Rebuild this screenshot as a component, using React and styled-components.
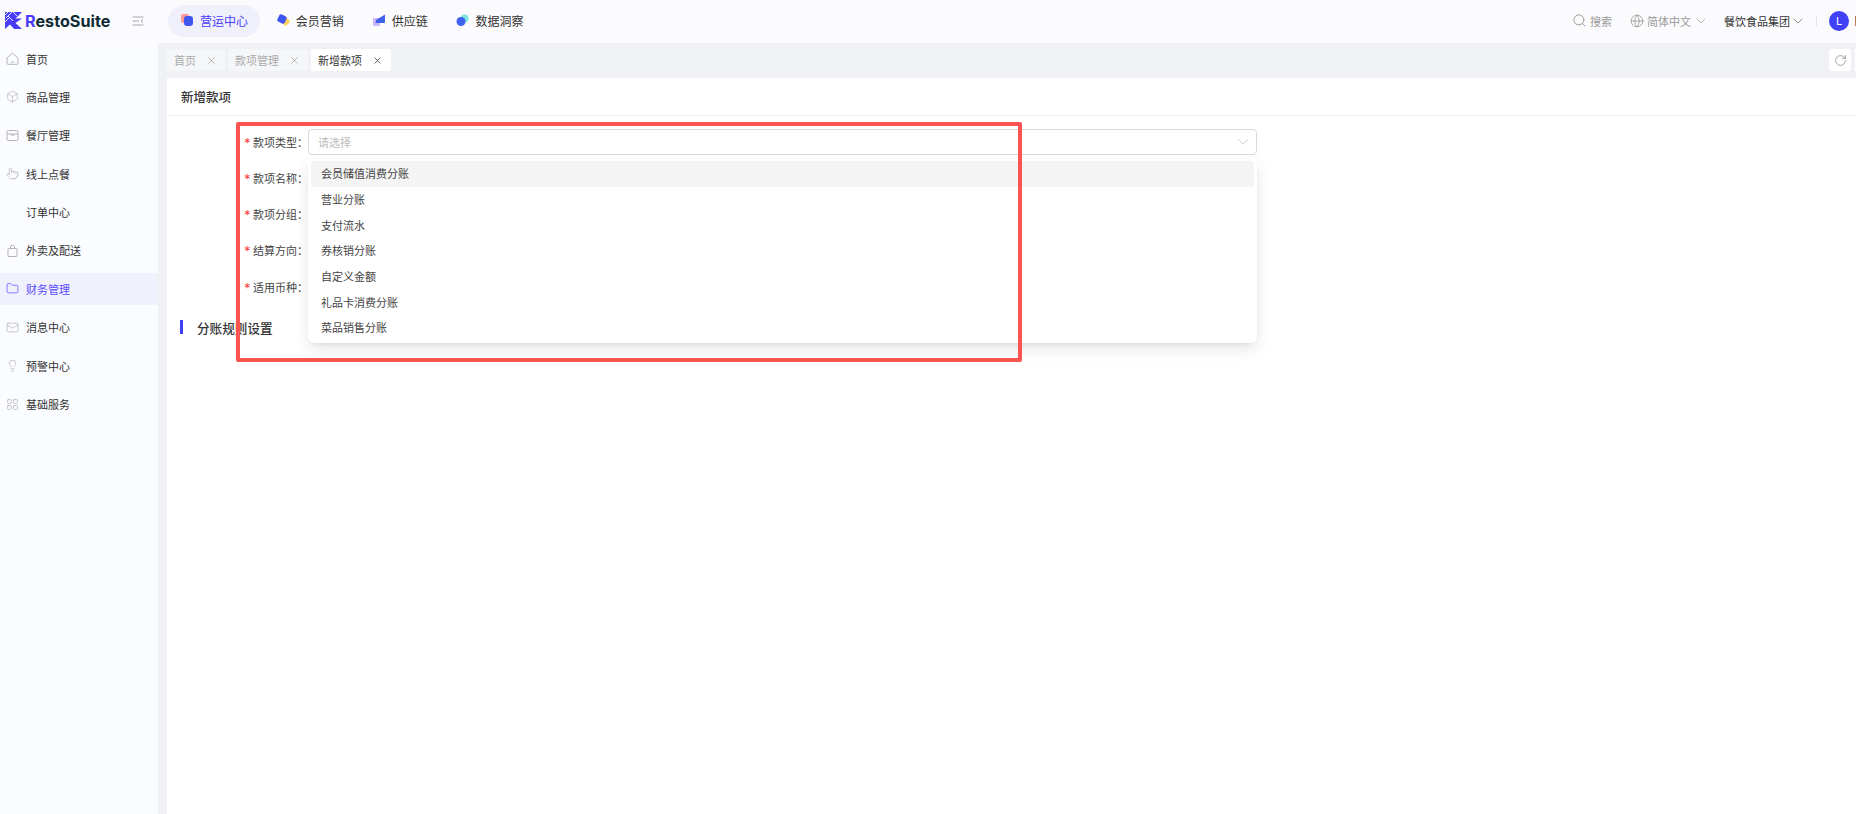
import React from "react";
import styled, { createGlobalStyle } from "styled-components";
import {
  Box,
  ChevronDown,
  Folder,
  Globe,
  LayoutGrid,
  Lightbulb,
  Mail,
  Pointer,
  RotateCw,
  Search,
  X,
} from "lucide-react";

const GlobalStyle = createGlobalStyle`
  html, body {
    margin: 0;
    height: 100%;
    overflow: hidden;
    background: #fff;
    font-family: Inter, "Noto Sans CJK SC", "Noto Sans", sans-serif;
    color: #333;
  }
  * { box-sizing: border-box; }
`;

const Page = styled.div`
  position: relative;
  width: 1856px;
  height: 814px;
  overflow: hidden;
  display: flex;
  flex-direction: column;
`;

const TopBar = styled.header`
  height: 43px;
  flex-shrink: 0;
  display: flex;
  align-items: center;
  padding-left: 5px;
  padding-bottom: 5px;
  padding-top: 3px;
  background: #fbfbfd;
  overflow: hidden;
`;

const Brand = styled.div`
  display: flex;
  align-items: center;
  gap: 3px;
  width: 127px;
`;

const BrandName = styled.span`
  font-size: 16.2px;
  font-weight: 700;
  color: #0f2a33;
  & b {
    color: #4a3dfa;
    font-weight: 700;
  }
`;

const CollapseIcon = styled.svg`
  width: 12px;
  height: 12px;
  margin-right: 24px;
  flex-shrink: 0;
`;

const NavList = styled.nav`
  display: flex;
  align-items: center;
  gap: 3.8px;
`;

const NavPill = styled.div`
  height: 32px;
  display: flex;
  align-items: center;
  gap: 6px;
  padding: 0 12px 0 13px;
  border-radius: 16px;
  font-size: 12px;
  background: ${(p) => (p.$active ? "#f0f0fb" : "transparent")};
  color: ${(p) => (p.$active ? "#4a3dfa" : "#333")};
`;

const NavIcon = styled.svg`
  width: 13px;
  height: 13px;
  flex-shrink: 0;
`;

const TopRight = styled.div`
  margin-left: auto;
  display: flex;
  align-items: center;
  font-size: 11px;
`;

const TopLink = styled.div`
  display: flex;
  align-items: center;
  gap: 3px;
  margin-right: ${(p) => p.$gap}px;
  color: ${(p) => (p.$dark ? "#333" : "#999")};
  & svg {
    flex-shrink: 0;
  }
`;

const Caret = styled(ChevronDown)`
  margin-left: ${(p) => p.$shift}px;
`;

const Divider = styled.span`
  width: 1px;
  height: 10px;
  background: #e4e4e8;
  margin-right: 12px;
`;

const Avatar = styled.span`
  width: 20px;
  height: 20px;
  border-radius: 50%;
  background: #4040f5;
  color: #fff;
  font-size: 11px;
  display: flex;
  align-items: center;
  justify-content: center;
  margin-right: 6px;
`;

const UserSliver = styled.span`
  width: 1px;
  height: 10px;
  background: #b87a50;
`;

const Body = styled.div`
  flex: 1;
  display: flex;
  min-height: 0;
`;

const Sidebar = styled.aside`
  width: 158px;
  flex-shrink: 0;
  background: #fbfcff;
  display: flex;
  flex-direction: column;
  gap: 6.4px;
`;

const MenuItem = styled.div`
  height: 32px;
  display: flex;
  align-items: center;
  gap: 7px;
  padding: 0 0 1px 6px;
  font-size: 11px;
  background: ${(p) => (p.$active ? "#f0f1fc" : "transparent")};
  color: ${(p) => (p.$active ? "#5b4dff" : "#333")};
  & svg {
    flex-shrink: 0;
    color: ${(p) => (p.$active ? "#7f75ff" : "#b4b4b8")};
  }
`;

const IconSlot = styled.span`
  width: 13px;
  height: 13px;
  flex-shrink: 0;
`;

const Main = styled.main`
  flex: 1;
  min-width: 0;
  background: #f0f1f5;
  padding-left: 9px;
  display: flex;
  flex-direction: column;
`;

const TabBar = styled.div`
  height: 35px;
  flex-shrink: 0;
  padding-top: 6px;
  display: flex;
  align-items: flex-start;
  gap: 3px;
`;

const Tab = styled.div`
  height: 22px;
  display: flex;
  align-items: center;
  justify-content: space-between;
  width: ${(p) => p.$width}px;
  padding: 0 8px 0 7px;
  border-radius: 3px;
  font-size: 11px;
  background: ${(p) => (p.$active ? "#fff" : "#f5f6f8")};
  color: ${(p) => (p.$active ? "#333" : "#aaa")};
  & svg {
    color: ${(p) => (p.$active ? "#333" : "#999")};
  }
`;

const RefreshButton = styled.div`
  margin-left: auto;
  margin-right: 4px;
  width: 22px;
  height: 22px;
  border-radius: 3px;
  background: #fff;
  color: #888;
  display: flex;
  align-items: center;
  justify-content: center;
`;

const NextSliver = styled.span`
  width: 1px;
  height: 22px;
  margin-left: -3px;
  background: #fff;
`;

const Card = styled.section`
  flex: 1;
  background: #fff;
`;

const CardTitle = styled.h1`
  margin: 0;
  height: 38px;
  padding-left: 14px;
  display: flex;
  align-items: center;
  font-size: 12.5px;
  font-weight: 500;
  color: #333;
  border-bottom: 1px solid #f0f0f0;
`;

const Form = styled.div`
  padding: 13px 0 0 77px;
  display: flex;
  flex-direction: column;
  gap: 10.3px;
  width: 1090px;
`;

const FormRow = styled.div`
  display: flex;
  align-items: center;
  height: 26px;
`;

const Label = styled.label`
  width: 64px;
  flex-shrink: 0;
  display: flex;
  align-items: center;
  padding-bottom: 1px;
  font-size: 11px;
  white-space: nowrap;
  color: #444;
  & i {
    width: 9px;
    padding-top: 3px;
    color: #f5443c;
    font-style: normal;
    font-size: 13px;
    line-height: 13px;
  }
`;

const Field = styled.div`
  position: relative;
  flex: 1;
  height: 26px;
  padding: 0 4px 0 9px;
  display: flex;
  align-items: center;
  justify-content: space-between;
  border: 1px solid #d9d9d9;
  border-radius: 4px;
  background: #fff;
`;

const Placeholder = styled.span`
  font-size: 11px;
  color: #bbb;
`;

const Dropdown = styled.ul`
  position: absolute;
  z-index: 2;
  top: 29px;
  left: -1px;
  right: -1px;
  height: 184px;
  margin: 0;
  padding: 2px 3px;
  list-style: none;
  background: #fff;
  border-radius: 6px;
  box-shadow: 0 6px 16px rgba(0, 0, 0, 0.1), 0 3px 6px -4px rgba(0, 0, 0, 0.12);
`;

const Option = styled.li`
  height: 25.7px;
  padding: 0 0 1px 10px;
  display: flex;
  align-items: center;
  font-size: 11px;
  color: #444;
  border-radius: 3px;
  background: ${(p) => (p.$active ? "#f4f4f4" : "transparent")};
`;

const Section = styled.h2`
  margin: 20px 0 0 13px;
  height: 14px;
  padding-left: 14px;
  display: flex;
  align-items: center;
  font-size: 12.6px;
  font-weight: 500;
  color: #333;
  border-left: 3px solid #4040f5;
`;

const Annotation = styled.div`
  position: absolute;
  z-index: 3;
  left: 236px;
  top: 122px;
  width: 786px;
  height: 240px;
  border: 4px solid #fb5252;
  border-radius: 2px;
  pointer-events: none;
`;

const MenuSvg = ({ children }) => (
  <svg width="13" height="13" viewBox="0 0 13 13" fill="none" stroke="currentColor" strokeWidth="1">
    {children}
  </svg>
);

const HouseIcon = () => (
  <MenuSvg>
    <path d="M1 6L6.5 1L12 6V11.5C12 12 11.7 12.3 11.2 12.3H1.8C1.3 12.3 1 12 1 11.5Z" />
    <path d="M5 10H8" />
  </MenuSvg>
);

const ShopIcon = () => (
  <MenuSvg>
    <rect x="1" y="1.5" width="11" height="10" rx="1.2" />
    <path d="M1 5H12M4.5 5C4.5 7 8.5 7 8.5 5" />
  </MenuSvg>
);

const BagIcon = () => (
  <MenuSvg>
    <rect x="2" y="4.5" width="9" height="8" rx="0.8" />
    <path d="M4.5 4.5V2.5C4.5 0.8 8.5 0.8 8.5 2.5V4.5" />
  </MenuSvg>
);

const sized = (Icon, stroke) => () => <Icon size={13} strokeWidth={stroke} />;

const menu = [
  ["首页", HouseIcon],
  ["商品管理", sized(Box, 1.3)],
  ["餐厅管理", ShopIcon],
  ["线上点餐", sized(Pointer, 1.3)],
  ["订单中心", null],
  ["外卖及配送", BagIcon],
  ["财务管理", sized(Folder, 1.8)],
  ["消息中心", sized(Mail, 1.3)],
  ["预警中心", sized(Lightbulb, 1.3)],
  ["基础服务", sized(LayoutGrid, 1.3)],
];

const options = [
  "会员储值消费分账",
  "营业分账",
  "支付流水",
  "券核销分账",
  "自定义金额",
  "礼品卡消费分账",
  "菜品销售分账",
];

const labels = ["款项名称", "款项分组", "结算方向", "适用币种"];

function Logo() {
  return (
    <svg width="17" height="17" viewBox="0 0 17 17">
      <path d="M0 0H17L10.5 6.5L17 6.5L10.5 11L17 17H9L5 12.5L0 17Z" fill="#4a3dfa" />
      <path d="M3 0L0 3M7 0L1 6M3 4L8 9M8 0L12 4M0 10L5 5" stroke="#fbfbfd" strokeWidth="0.9" />
    </svg>
  );
}

function NavGlyph({ kind }) {
  if (kind === "ops") {
    return (
      <NavIcon viewBox="0 0 13 13">
        <rect x="0" y="0" width="8" height="9" rx="2" fill="#ff9a9a" />
        <rect x="3" y="2" width="9" height="10" rx="3" fill="#3f55f0" />
      </NavIcon>
    );
  }
  if (kind === "member") {
    return (
      <NavIcon viewBox="0 0 13 13">
        <rect x="5" y="4" width="7" height="7" rx="2" transform="rotate(45 8.5 7.5)" fill="#ffd35c" />
        <rect x="1" y="1" width="8" height="8" rx="2" transform="rotate(25 5 5)" fill="#3f55f0" />
      </NavIcon>
    );
  }
  if (kind === "chain") {
    return (
      <NavIcon viewBox="0 0 13 13">
        <rect x="0" y="4" width="7" height="8" rx="1" fill="#cdb5f7" />
        <path d="M3 6L12 0.5V7.5C12 8.5 11.5 9 10.5 9H2.5Z" fill="#3f62e8" />
      </NavIcon>
    );
  }
  return (
    <NavIcon viewBox="0 0 13 13">
      <circle cx="8.5" cy="4.5" r="4" fill="#7de6e0" />
      <circle cx="5" cy="7.5" r="4.5" fill="#3f62f0" />
    </NavIcon>
  );
}

export default function App() {
  return (
    <Page>
      <GlobalStyle />
      <TopBar>
        <Brand>
          <Logo />
          <BrandName>
            <b>R</b>estoSuite
          </BrandName>
        </Brand>
        <CollapseIcon viewBox="0 0 12 12" fill="none" stroke="#a8a8ac" strokeWidth="1">
          <path d="M0.5 2H11.5M0.5 6H7M0.5 10H11.5" />
          <path d="M11 4.2L9 6L11 7.8" />
        </CollapseIcon>
        <NavList>
          <NavPill $active>
            <NavGlyph kind="ops" />
            营运中心
          </NavPill>
          <NavPill>
            <NavGlyph kind="member" />
            会员营销
          </NavPill>
          <NavPill>
            <NavGlyph kind="chain" />
            供应链
          </NavPill>
          <NavPill>
            <NavGlyph kind="data" />
            数据洞察
          </NavPill>
        </NavList>
        <TopRight>
          <TopLink $gap={18}>
            <Search size={15} color="#999" strokeWidth={1.5} />
            搜索
          </TopLink>
          <TopLink $gap={15}>
            <Globe size={14} color="#999" strokeWidth={1.4} />
            简体中文
            <Caret size={16} color="#aaa" strokeWidth={1.2} $shift={-1} />
          </TopLink>
          <TopLink $gap={10} $dark>
            餐饮食品集团
            <Caret size={16} color="#777" strokeWidth={1.2} $shift={-3} />
          </TopLink>
          <Divider />
          <Avatar>L</Avatar>
          <UserSliver />
        </TopRight>
      </TopBar>
      <Body>
        <Sidebar>
          {menu.map(([name, Icon]) => (
            <MenuItem key={name} $active={name === "财务管理"}>
              {Icon ? <Icon /> : <IconSlot />}
              {name}
            </MenuItem>
          ))}
        </Sidebar>
        <Main>
          <TabBar>
            <Tab $width={58}>
              首页
              <X size={11} strokeWidth={1.5} />
            </Tab>
            <Tab $width={80}>
              款项管理
              <X size={11} strokeWidth={1.5} />
            </Tab>
            <Tab $width={80} $active>
              新增款项
              <X size={11} strokeWidth={1.5} />
            </Tab>
            <RefreshButton>
              <RotateCw size={13} strokeWidth={1.4} />
            </RefreshButton>
            <NextSliver />
          </TabBar>
          <Card>
            <CardTitle>新增款项</CardTitle>
            <Form>
              <FormRow>
                <Label>
                  <i>*</i>款项类型：
                </Label>
                <Field>
                  <Placeholder>请选择</Placeholder>
                  <ChevronDown size={18} color="#bbb" strokeWidth={1} />
                  <Dropdown>
                    {options.map((o, i) => (
                      <Option key={o} $active={i === 0}>
                        {o}
                      </Option>
                    ))}
                  </Dropdown>
                </Field>
              </FormRow>
              {labels.map((l) => (
                <FormRow key={l}>
                  <Label>
                    <i>*</i>
                    {l}：
                  </Label>
                  <Field />
                </FormRow>
              ))}
            </Form>
            <Section>分账规则设置</Section>
          </Card>
        </Main>
      </Body>
      <Annotation />
    </Page>
  );
}
